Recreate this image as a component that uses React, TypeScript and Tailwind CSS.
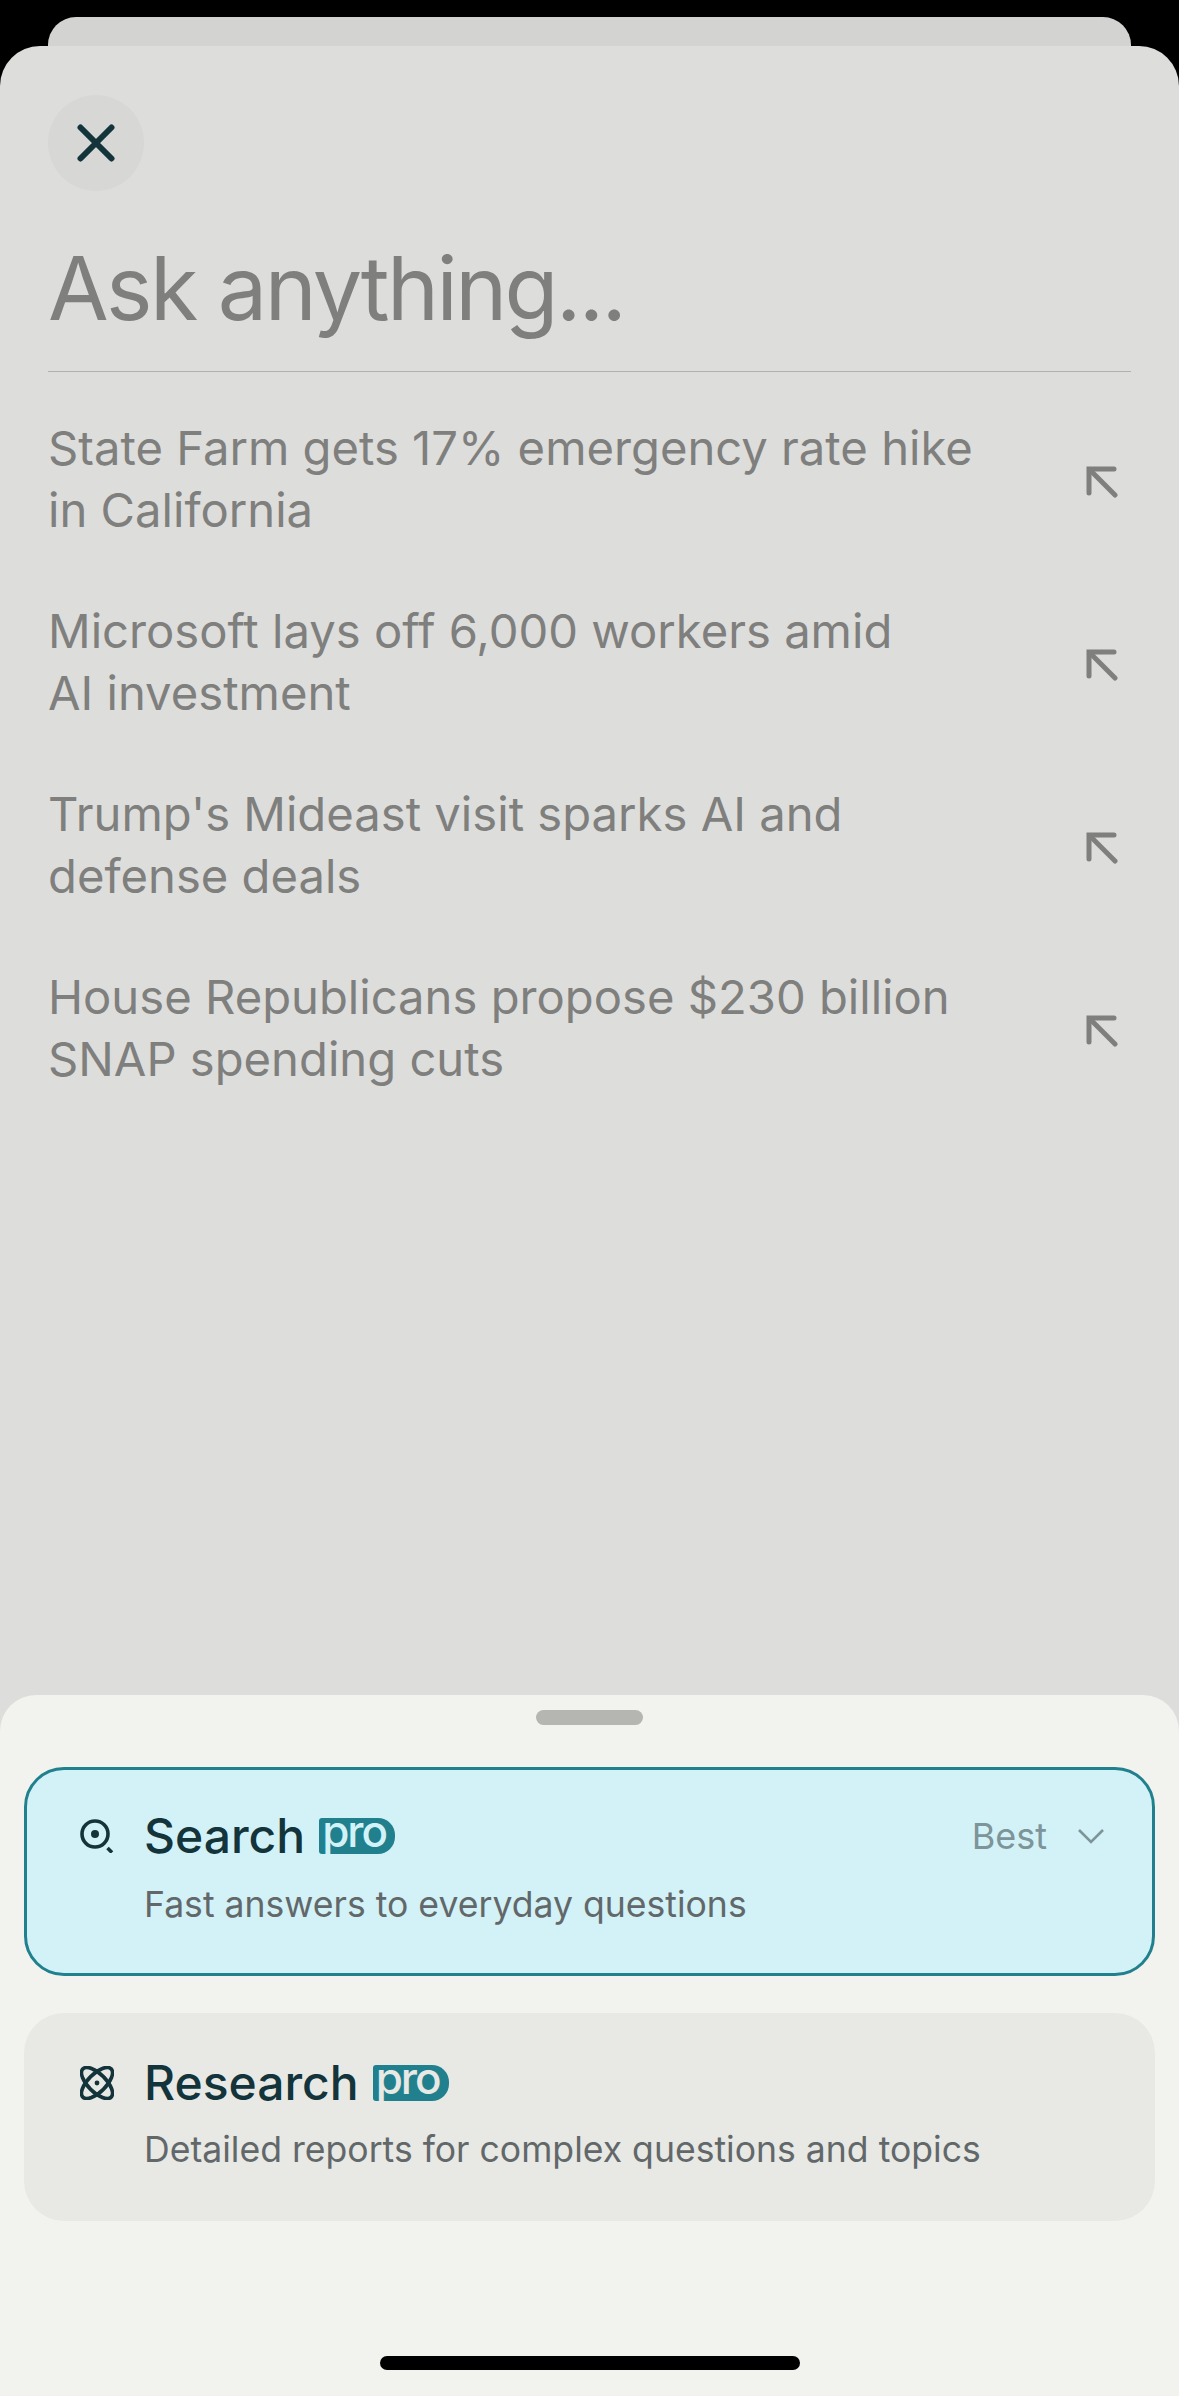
const font = { fontFamily: '"Inter", "Liberation Sans", sans-serif' };

const suggestions = [
  ["State Farm gets 17% emergency rate hike", "in California"],
  ["Microsoft lays off 6,000 workers amid", "AI investment"],
  ["Trump's Mideast visit sparks AI and", "defense deals"],
  ["House Republicans propose $230 billion", "SNAP spending cuts"],
];

function CloseIcon() {
  return (
    <svg width="38" height="38" viewBox="0 0 38 38" fill="none" stroke="#13343b" strokeWidth="6" strokeLinecap="round">
      <path d="M3.5 3.5 L34.5 34.5 M34.5 3.5 L3.5 34.5" />
    </svg>
  );
}

function ArrowUpLeft() {
  return (
    <svg className="mt-[5px]" width="32" height="32" viewBox="0 0 32 32" fill="none" stroke="#7f7f7e" strokeWidth="5" strokeLinecap="round">
      <path d="M3 27 V3 H28" strokeLinejoin="miter" />
      <path d="M4 4 L29 29" />
    </svg>
  );
}

function SearchIcon() {
  return (
    <svg width="34" height="34" viewBox="0 0 34 34" fill="none" stroke="#13343b" strokeWidth="3.6">
      <circle cx="15" cy="15" r="13" />
      <circle cx="15" cy="15" r="4" fill="#13343b" stroke="none" />
      <path d="M27.5 29 L32 33.5" />
    </svg>
  );
}

function AtomIcon() {
  return (
    <svg width="34" height="34" viewBox="0 0 34 34" fill="none" stroke="#13343b" strokeWidth="3.6">
      <ellipse cx="17" cy="17" rx="9" ry="20" transform="rotate(45 17 17)" />
      <ellipse cx="17" cy="17" rx="9" ry="20" transform="rotate(-45 17 17)" />
      <circle cx="17" cy="17" r="2.4" fill="#13343b" stroke="none" />
    </svg>
  );
}

function ChevronDown() {
  return (
    <svg width="28" height="16" viewBox="0 0 28 16" fill="none" stroke="#7d9499" strokeWidth="2.6">
      <path d="M2 2 L14 14 L26 2" />
    </svg>
  );
}

function ProBadge({ textColor }: { textColor: string }) {
  return (
    <span
      className={`block h-[36px] w-[76px] overflow-hidden rounded-l-[3px] rounded-r-[17px] bg-[#21808d] pl-[3px] text-[44px] leading-[26px] font-medium tracking-[-2px] ${textColor}`}
    >
      pro
    </span>
  );
}

export default function App() {
  return (
    <div className="flex h-[2396px] w-[1179px] flex-col overflow-hidden bg-black pt-[17px]" style={font}>
      <div className="mx-[48px] h-[29px] shrink-0 rounded-t-[28px] bg-[#d3d3d1]" />

      {/* Dimmed composer behind the mode picker */}
      <div className="flex flex-1 flex-col rounded-t-[40px] bg-[#dddddb] px-[48px] pt-[49px]">
        <button className="flex h-[96px] w-[96px] items-center justify-center rounded-full bg-[#d7d8d6]">
          <CloseIcon />
        </button>
        <div className="mt-[39px] border-b-[1.5px] border-[#b1b1b0] pb-[24px]">
          <h1 className="text-[88px] leading-[117px] font-normal tracking-[-2.6px] text-[#7f7f7e]">Ask anything...</h1>
        </div>
        <ul className="mt-[46px] flex flex-col gap-[61px]">
          {suggestions.map((lines) => (
            <li key={lines[0]} className="flex h-[122px] items-center justify-between pr-[13px]">
              <p className="text-[47.2px] leading-[62px] text-[#7f7f7e]">
                {lines[0]}
                <br />
                {lines[1]}
              </p>
              <ArrowUpLeft />
            </li>
          ))}
        </ul>
      </div>

      {/* Mode picker sheet */}
      <div className="relative -mt-[701px] flex h-[701px] shrink-0 flex-col rounded-t-[36px] bg-[#f2f3ef] px-[24px] pt-[15px]">
        <div className="mx-auto h-[15px] w-[107px] rounded-full bg-[#b5b6b1]" />
        <div className="mt-[42px] flex h-[209px] flex-col rounded-[40px] border-[3px] border-[#21808d] bg-[#d3f2f7] pt-[39px] pr-[47px] pl-[53px]">
          <div className="flex h-[54px] items-center">
            <SearchIcon />
            <span className="ml-[30px] text-[48px] leading-[54px] font-medium text-[#13343b]">Search</span>
            <span className="ml-[14px]">
              <ProBadge textColor="text-[#d3f2f7]" />
            </span>
            <span className="ml-auto text-[36px] leading-[54px] text-[#7d9499]">Best</span>
            <span className="ml-[30px]">
              <ChevronDown />
            </span>
          </div>
          <p className="mt-[20px] ml-[64px] text-[35.6px] leading-[44px] text-[#62686a]">Fast answers to everyday questions</p>
        </div>
        <div className="mt-[37px] flex h-[208px] flex-col rounded-[40px] bg-[#e8e9e5] pt-[43px] pr-[49px] pl-[56px]">
          <div className="flex h-[54px] items-center">
            <AtomIcon />
            <span className="ml-[30px] text-[48px] leading-[54px] font-medium text-[#13343b]">Research</span>
            <span className="ml-[14px]">
              <ProBadge textColor="text-[#e8e9e5]" />
            </span>
          </div>
          <p className="mt-[18px] ml-[64px] text-[35.6px] leading-[44px] text-[#62686a]">Detailed reports for complex questions and topics</p>
        </div>
        <div className="mx-auto mt-[135px] h-[14px] w-[420px] rounded-full bg-black" />
      </div>
    </div>
  );
}
